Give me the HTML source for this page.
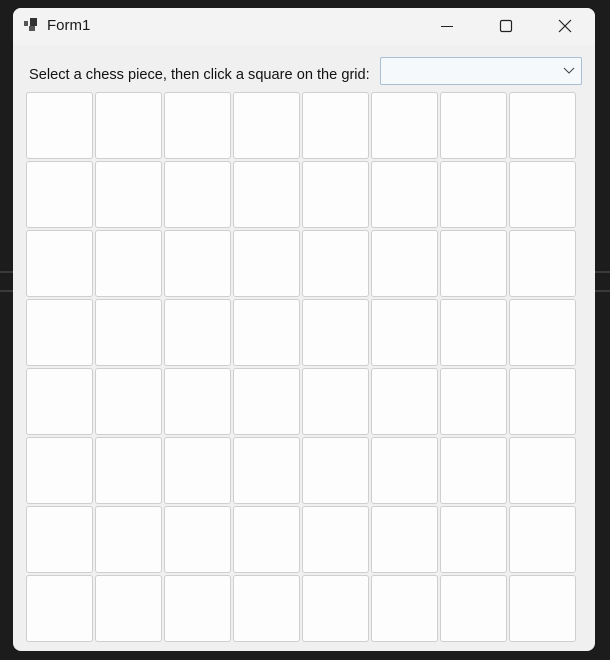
<!DOCTYPE html>
<html><head><meta charset="utf-8"><style>
body{margin:0;width:610px;height:660px;background:#1c1c1c;position:relative;overflow:hidden;font-family:"Liberation Sans",sans-serif}
.ln{position:absolute;left:0;width:610px;height:2px;background:#3a3a3a}
.win{position:absolute;left:13px;top:8px;width:582px;height:643px;background:#f0f0f0;border-radius:8px;overflow:hidden}
.tb{position:absolute;left:0;top:0;width:582px;height:37px;background:#f3f3f3}
.title{position:absolute;left:34px;top:9px;font-size:15px;color:#1a1a1a}
.lbl{position:absolute;left:16px;top:59px;font-size:14.6px;color:#111;white-space:nowrap}
.cb{position:absolute;left:367px;top:49px;width:200px;height:26px;border:1px solid #a9bfd6;background:#f5f9fc;border-radius:2px}
.c{position:absolute;width:65px;height:65px;background:#fdfdfd;border:1px solid #cfcfcf;border-radius:3px}
</style></head><body>
<div class="ln" style="top:271px"></div><div class="ln" style="top:290px"></div>
<div class="win">
<div class="tb">
<svg style="position:absolute;left:0;top:0" width="582" height="37" viewBox="0 0 582 37">
<rect x="11" y="13" width="4" height="5" fill="#555"/><rect x="17" y="10" width="7" height="8" fill="#333"/><rect x="16" y="18" width="6" height="5" fill="#555"/>
<line x1="428" y1="18.5" x2="440" y2="18.5" stroke="#222" stroke-width="1"/>
<rect x="487.5" y="12.5" width="11" height="11" rx="1.5" fill="none" stroke="#222" stroke-width="1.2"/>
<path d="M546 12 L558 24 M558 12 L546 24" stroke="#222" stroke-width="1.2"/>
</svg>
<div class="title">Form1</div>
</div>
<div class="lbl">Select a chess piece, then click a square on the grid:</div>
<div class="cb"><svg style="position:absolute;right:6px;top:9px" width="12" height="8"><path d="M1 1 L6 6 L11 1" fill="none" stroke="#444" stroke-width="1"/></svg></div>
<div id="g"></div>
</div>
<script>
var g=document.getElementById('g'),h='';
for(var r=0;r<8;r++)for(var c=0;c<8;c++)h+='<div class="c" style="left:'+(13+c*69)+'px;top:'+(84+r*69)+'px"></div>';
g.innerHTML=h;
</script>
</body></html>
